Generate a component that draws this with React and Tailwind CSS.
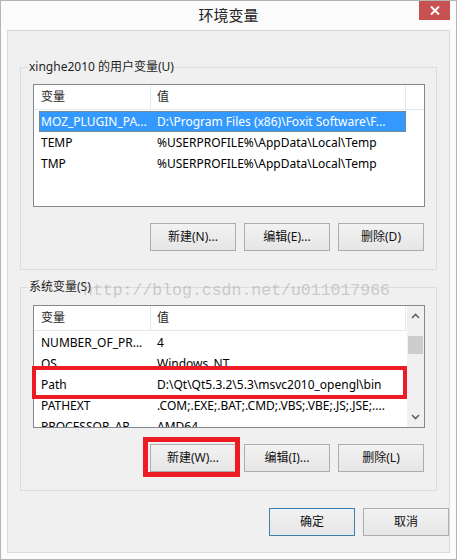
import React from "react";

const FONT = { fontFamily: '"Noto Sans", "Noto Sans CJK SC", sans-serif' };

function Btn({ children, primary }) {
  return (
    <div
      className={
        "w-[86px] h-[28px] flex items-center justify-center text-[12px] text-[#111] bg-gradient-to-b from-[#f2f2f2] to-[#e6e6e6] border " +
        (primary ? "border-[#3c7fb1]" : "border-[#adadad]")
      }
    >
      {children}
    </div>
  );
}

function Header({ extra }) {
  return (
    <div className="shrink-0 flex h-[25px] border-b border-[#e3e9f1] bg-white text-[12px] text-[#1e1e1e]">
      <div className="w-[117px] border-r border-[#e3e9f1] pl-[7px] flex items-center">变量</div>
      <div className="w-[255px] border-r border-[#e3e9f1] pl-[6px] flex items-center">值</div>
      {extra && <div className="flex-1" />}
    </div>
  );
}

function Row({ name, value, selected }) {
  return (
    <div
      className={
        "shrink-0 ml-[5px] w-[367px] h-[21px] flex items-center whitespace-nowrap overflow-hidden text-[12px] " +
        (selected
          ? "bg-[#3399ff] text-white outline outline-1 outline-dotted outline-[#b07a30] -outline-offset-1"
          : "text-black")
      }
    >
      <div className="w-[112px] pl-[2px] overflow-hidden">{name}</div>
      <div className="flex-1 pl-[6px] overflow-hidden">{value}</div>
    </div>
  );
}

function Chevron({ up }) {
  return (
    <svg width="9" height="6" viewBox="0 0 9 6">
      <path
        d={up ? "M1 5 L4.5 1.5 L8 5" : "M1 1 L4.5 4.5 L8 1"}
        fill="none"
        stroke="#606060"
        strokeWidth="1.6"
      />
    </svg>
  );
}

export default function App() {
  return (
    <div
      className="relative w-[457px] h-[560px] border border-[#b5b5b5] bg-[#fbfbfb] flex flex-col"
      style={FONT}
    >
      {/* title bar */}
      <div className="h-[29px] flex items-center justify-center text-[15px] text-[#222]">环境变量</div>
      <div className="absolute top-0 right-[6px] w-[31px] h-[19px] bg-[#c75050] flex items-center justify-center">
        <svg width="10" height="9" viewBox="0 0 10 9">
          <path d="M1 0.5 L9 8.5 M9 0.5 L1 8.5" stroke="white" strokeWidth="2" />
        </svg>
      </div>

      {/* client area */}
      <div className="mx-[6px] h-[523px] border border-[#d9d9d9] bg-[#f0f0f0] flex flex-col items-start pl-[12px]">
        {/* user vars group */}
        <div className="relative mt-[36px] w-[417px] h-[203px] border border-[#dcdcdc] flex flex-col">
          <div className="absolute -top-[9px] left-[7px] px-[1px] bg-[#f0f0f0] text-[12px] leading-[16px] text-[#1e1e1e]">
            xinghe2010 的用户变量(U)
          </div>
          <div className="ml-[12px] mt-[16px] w-[392px] h-[123px] border border-[#828790] bg-white overflow-hidden flex flex-col">
            <Header extra />
            <div className="pt-[1px] flex flex-col">
              <Row selected name="MOZ_PLUGIN_PA..." value="D:\Program Files (x86)\Foxit Software\F..." />
              <Row name="TEMP" value="%USERPROFILE%\AppData\Local\Temp" />
              <Row name="TMP" value="%USERPROFILE%\AppData\Local\Temp" />
            </div>
          </div>
          <div className="mt-[16px] pr-[12px] flex justify-end gap-[8px]">
            <Btn>新建(N)...</Btn>
            <Btn>编辑(E)...</Btn>
            <Btn>删除(D)</Btn>
          </div>
        </div>

        {/* system vars group */}
        <div className="relative mt-[17px] w-[417px] h-[204px] border border-[#dcdcdc] flex flex-col">
          <div className="absolute -top-[9px] left-[7px] px-[1px] bg-[#f0f0f0] text-[12px] leading-[16px] text-[#1e1e1e]">
            系统变量(S)
          </div>
          <div className="ml-[12px] mt-[17px] w-[392px] h-[123px] shrink-0 border border-[#828790] bg-white overflow-hidden flex">
            <div className="w-[373px] flex flex-col overflow-hidden">
              <Header />
              <div className="pt-[1px] flex flex-col shrink-0">
                <Row name="NUMBER_OF_PR..." value="4" />
                <Row name="OS" value="Windows_NT" />
                <Row name="Path" value="D:\Qt\Qt5.3.2\5.3\msvc2010_opengl\bin" />
                <Row name="PATHEXT" value=".COM;.EXE;.BAT;.CMD;.VBS;.VBE;.JS;.JSE;...." />
                <Row name="PROCESSOR_AR..." value="AMD64" />
              </div>
            </div>
            <div className="w-[17px] bg-[#f0f0f0] flex flex-col items-center">
              <div className="h-[20px] flex items-center justify-center">
                <Chevron up />
              </div>
              <div className="mt-[10px] w-[15px] h-[18px] bg-[#cdcdcd]" />
              <div className="flex-1" />
              <div className="h-[20px] flex items-center justify-center">
                <Chevron />
              </div>
            </div>
          </div>
          {/* red annotation around Path row */}
          <div className="absolute left-[11px] top-[78px] w-[375px] h-[33px] border-[4px] border-[#ed1c24]" />
          <div className="mt-[16px] pr-[12px] flex justify-end gap-[8px]">
            <Btn>新建(W)...</Btn>
            <Btn>编辑(I)...</Btn>
            <Btn>删除(L)</Btn>
          </div>
          {/* red annotation around new button */}
          <div className="absolute left-[122px] top-[149px] w-[97px] h-[40px] border-[5px] border-[#ed1c24]" />
        </div>

        <div className="mt-[17px] w-[429px] flex justify-end gap-[8px]">
          <Btn primary>确定</Btn>
          <Btn>取消</Btn>
        </div>
      </div>

      {/* watermark */}
      <div
        className="absolute left-[82px] top-[280px] text-[16.5px] leading-[20px] text-[rgba(140,140,140,0.4)] whitespace-nowrap pointer-events-none"
        style={{ fontFamily: '"Liberation Mono", monospace' }}
      >
        http://blog.csdn.net/u011017966
      </div>
    </div>
  );
}
